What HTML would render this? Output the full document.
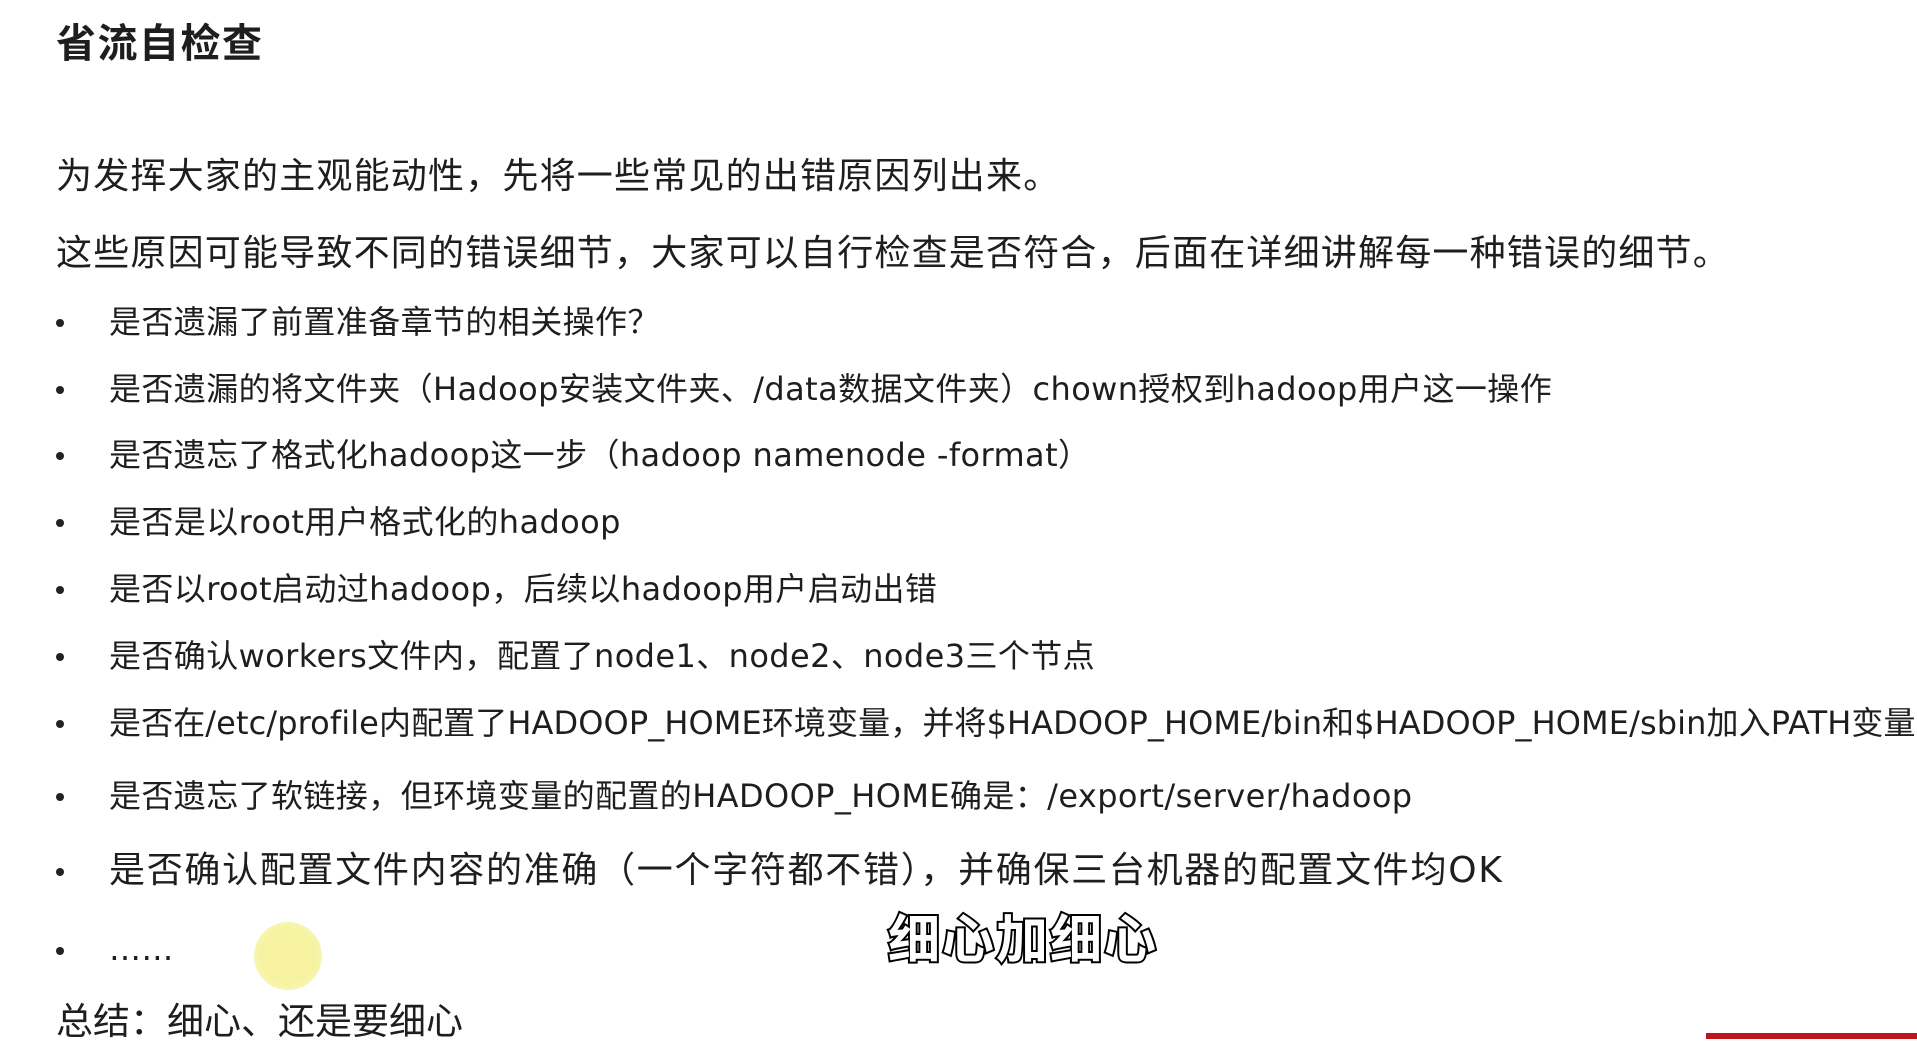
<!DOCTYPE html>
<html><head><meta charset="utf-8"><style>
html,body{margin:0;padding:0;}
body{width:1917px;height:1039px;background:#fff;position:relative;overflow:hidden;font-family:"DejaVu Sans","Noto Sans CJK SC",sans-serif;color:#1e1e1e;}
.l{position:absolute;white-space:nowrap;line-height:1;}
.t{left:56px;top:20px;font-size:40px;font-weight:bold;letter-spacing:1.5px;font-family:"Noto Sans CJK SC",sans-serif;}
.p{left:56px;font-size:36px;letter-spacing:1.2px;}
.b{left:109px;font-size:32px;letter-spacing:0.4px;}
.d{position:absolute;left:56px;width:8px;height:8px;border-radius:50%;background:#222;}
.sub{position:absolute;left:888px;top:898px;font-size:52px;font-weight:bold;color:#fff;letter-spacing:2px;-webkit-text-stroke:4px #000;paint-order:stroke fill;font-family:"Noto Sans CJK SC",sans-serif;}
</style></head><body>
<div class="l t">省流自检查</div>
<div class="l p" style="top:159px">为发挥大家的主观能动性，先将一些常见的出错原因列出来。</div>
<div class="l p" style="top:236px">这些原因可能导致不同的错误细节，大家可以自行检查是否符合，后面在详细讲解每一种错误的细节。</div>

<div class="d" style="top:319px"></div><div class="l b" style="top:306px">是否遗漏了前置准备章节的相关操作？</div>
<div class="d" style="top:386px"></div><div class="l b" style="top:373px">是否遗漏的将文件夹（Hadoop安装文件夹、/data数据文件夹）chown授权到hadoop用户这一操作</div>
<div class="d" style="top:452px"></div><div class="l b" style="top:439px">是否遗忘了格式化hadoop这一步（hadoop namenode -format）</div>
<div class="d" style="top:519px"></div><div class="l b" style="top:506px">是否是以root用户格式化的hadoop</div>
<div class="d" style="top:586px"></div><div class="l b" style="top:573px">是否以root启动过hadoop，后续以hadoop用户启动出错</div>
<div class="d" style="top:653px"></div><div class="l b" style="top:640px">是否确认workers文件内，配置了node1、node2、node3三个节点</div>
<div class="d" style="top:720px"></div><div class="l b" style="top:707px;letter-spacing:0.1px">是否在/etc/profile内配置了HADOOP_HOME环境变量，并将$HADOOP_HOME/bin和$HADOOP_HOME/sbin加入PATH变量</div>
<div class="d" style="top:793px"></div><div class="l b" style="top:780px">是否遗忘了软链接，但环境变量的配置的HADOOP_HOME确是：/export/server/hadoop</div>
<div class="d" style="top:868px"></div><div class="l b" style="top:853px;font-size:36px;letter-spacing:1.7px">是否确认配置文件内容的准确（一个字符都不错），并确保三台机器的配置文件均OK</div>
<div class="d" style="top:947px"></div><div class="l b" style="top:933px">……</div>
<div class="l" style="left:56px;top:1003px;font-size:37px">总结：细心、还是要细心</div>

<div style="position:absolute;left:254px;top:922px;width:68px;height:68px;border-radius:50%;background:radial-gradient(circle,#f6f2a0 55%,#fbf8d2 100%);"></div>
<div class="sub">细心加细心</div>
<div style="position:absolute;left:1706px;top:1033px;width:211px;height:6px;background:#c0141c;"></div>
</body></html>
